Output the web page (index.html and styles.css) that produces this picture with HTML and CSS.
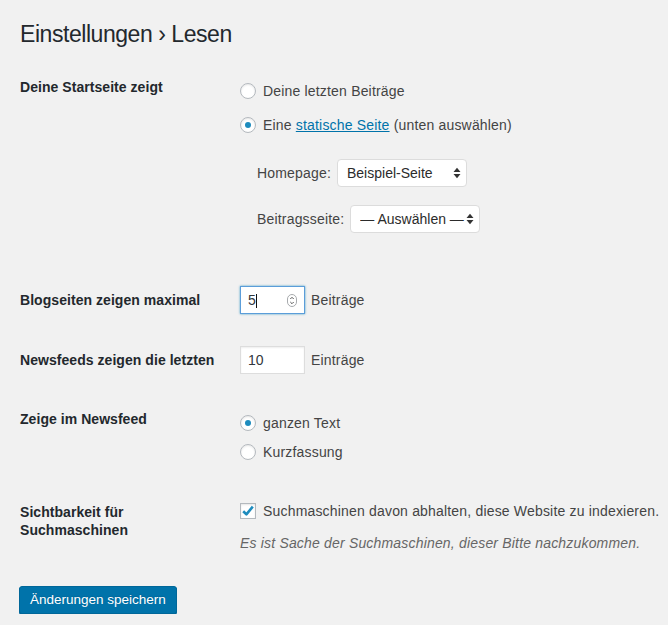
FILE: index.html
```html
<!DOCTYPE html>
<html lang="de">
<head>
<meta charset="utf-8">
<title>Einstellungen › Lesen</title>
<link rel="stylesheet" href="styles.css">
</head>
<body>
<div class="wrap">
  <h1 class="title">Einstellungen › Lesen</h1>
  <form class="settings">
    <div class="row row-front">
      <div class="th">Deine Startseite zeigt</div>
      <div class="td">
        <label class="choice"><input type="radio" name="front"><span>Deine letzten Beiträge</span></label>
        <label class="choice choice-gap"><input type="radio" name="front" checked><span>Eine <a href="#">statische Seite</a> (unten auswählen)</span></label>
        <div class="pages">
          <label class="page-row"><span>Homepage:</span>
            <span class="select-wrap">
              <select class="select"><option>Beispiel-Seite</option></select>
              <svg class="updown" width="8" height="12" viewBox="0 0 8 12"><path d="M0.5 5 L4 0.8 L7.5 5 Z M0.5 7 L4 11.2 L7.5 7 Z" fill="#333"/></svg>
            </span>
          </label>
          <label class="page-row page-row-2"><span>Beitragsseite:</span>
            <span class="select-wrap">
              <select class="select"><option>— Auswählen —</option></select>
              <svg class="updown" width="8" height="12" viewBox="0 0 8 12"><path d="M0.5 5 L4 0.8 L7.5 5 Z M0.5 7 L4 11.2 L7.5 7 Z" fill="#333"/></svg>
            </span>
          </label>
        </div>
      </div>
    </div>

    <div class="row row-center row-blog">
      <div class="th">Blogseiten zeigen maximal</div>
      <div class="td inline">
        <span class="num-wrap">
          <input class="text-input focused" type="text" value="5">
          <span class="caret"></span>
          <svg class="spinner" width="10" height="13" viewBox="0 0 10 13"><rect x="0.5" y="0.5" width="9" height="12" rx="4.5" fill="#fff" stroke="#a7aaad"/><path d="M3.3 5 L5 3.3 L6.7 5 M3.3 8 L5 9.7 L6.7 8" fill="none" stroke="#555" stroke-width="1"/></svg>
        </span>
        <span>Beiträge</span>
      </div>
    </div>

    <div class="row row-center row-feed">
      <div class="th">Newsfeeds zeigen die letzten</div>
      <div class="td inline">
        <input class="text-input" type="text" value="10">
        <span>Einträge</span>
      </div>
    </div>

    <div class="row row-newsfeed">
      <div class="th">Zeige im Newsfeed</div>
      <div class="td">
        <label class="choice"><input type="radio" name="feed" checked><span>ganzen Text</span></label>
        <label class="choice choice-gap-small"><input type="radio" name="feed"><span>Kurzfassung</span></label>
      </div>
    </div>

    <div class="row row-search">
      <div class="th th-search">Sichtbarkeit für Suchmaschinen</div>
      <div class="td">
        <label class="choice nowrap">
          <span class="checkbox"><svg width="14" height="14" viewBox="0 0 14 14"><path d="M2.2 7.2 L5.4 10.3 L11.8 2.6" fill="none" stroke="#1e8cbe" stroke-width="2.6" stroke-linejoin="round"/></svg></span>
          <span>Suchmaschinen davon abhalten, diese Website zu indexieren.</span>
        </label>
        <p class="description">Es ist Sache der Suchmaschinen, dieser Bitte nachzukommen.</p>
      </div>
    </div>

    <div class="submit">
      <button type="button" class="button-primary">Änderungen speichern</button>
    </div>
  </form>
</div>
</body>
</html>
```

FILE: styles.css
```css
html, body {
  margin: 0;
  padding: 0;
  background: #f1f1f1;
}

body {
  font-family: "Liberation Sans", Arial, sans-serif;
  font-size: 14px;
  color: #444;
}

.wrap {
  padding: 0 0 0 20px;
}

.title {
  margin: 0;
  padding-top: 19px;
  font-size: 23px;
  line-height: 30px;
  font-weight: 400;
  letter-spacing: -0.45px;
  color: #23282d;
}

.row {
  display: grid;
  grid-template-columns: 220px minmax(0, 1fr);
  align-items: start;
}

.th {
  box-sizing: border-box;
  padding-right: 20px;
  font-weight: 700;
  color: #23282d;
  line-height: 18px;
  letter-spacing: 0.05px;
}

.td {
  letter-spacing: 0.18px;
}

.row-front { margin-top: 29px; }
.row-front .td { padding-top: 1px; }

.row-center { align-items: center; }
.row-blog { margin-top: 53px; }
.row-feed { margin-top: 32px; }

.row-newsfeed { margin-top: 36px; }
.row-newsfeed .td { padding-top: 1px; }

.row-search { margin-top: 35px; }
.th-search { padding-top: 4px; }

.choice {
  display: flex;
  align-items: center;
  gap: 7px;
  height: 24px;
  line-height: 24px;
  color: #444;
}

.nowrap { white-space: nowrap; }

.choice-gap { margin-top: 10px; }
.choice-gap-small { margin-top: 5px; }

.choice a {
  color: #0073aa;
  text-decoration: underline;
}

input[type="radio"] {
  appearance: none;
  -webkit-appearance: none;
  flex-shrink: 0;
  box-sizing: border-box;
  width: 16px;
  height: 16px;
  margin: 0;
  border: 1px solid #b4b9be;
  border-radius: 50%;
  background: #fff;
  box-shadow: inset 0 1px 2px rgba(0, 0, 0, 0.1);
  display: grid;
  place-content: center;
}

input[type="radio"]:checked::before {
  content: "";
  display: block;
  width: 6px;
  height: 6px;
  border-radius: 50%;
  background: #1e8cbe;
}

.pages {
  margin-top: 22px;
  padding-left: 17px;
}

.page-row {
  display: flex;
  align-items: center;
  gap: 6px;
  height: 28px;
  color: #444;
}

.page-row-2 { margin-top: 18px; }

.select-wrap {
  position: relative;
  display: inline-block;
}

.select {
  appearance: none;
  -webkit-appearance: none;
  box-sizing: border-box;
  width: 130px;
  height: 28px;
  margin: 0;
  padding: 0 12px 0 9px;
  border: 1px solid #dcdcdc;
  border-radius: 4px;
  background: #fff;
  font-family: "Liberation Sans", Arial, sans-serif;
  font-size: 14px;
  letter-spacing: 0;
  color: #2b2b2b;
}

.updown {
  position: absolute;
  right: 6px;
  top: 8px;
  pointer-events: none;
}

.inline {
  display: flex;
  align-items: center;
  gap: 6px;
}

.num-wrap {
  position: relative;
  display: inline-block;
  height: 28px;
}

.text-input {
  box-sizing: border-box;
  width: 65px;
  height: 28px;
  margin: 0;
  padding: 0 7px;
  border: 1px solid #ddd;
  border-radius: 0;
  background: #fff;
  box-shadow: inset 0 1px 2px rgba(0, 0, 0, 0.07);
  font-family: "Liberation Sans", Arial, sans-serif;
  font-size: 14px;
  color: #32373c;
  outline: none;
}

.text-input.focused {
  border-color: #5b9dd9;
  box-shadow: 0 0 2px rgba(30, 140, 190, 0.8);
}

.caret {
  position: absolute;
  left: 16px;
  top: 8px;
  width: 1px;
  height: 14px;
  background: #111;
}

.spinner {
  position: absolute;
  left: 47px;
  top: 8px;
}

.checkbox {
  flex-shrink: 0;
  box-sizing: border-box;
  width: 16px;
  height: 16px;
  border: 1px solid #b4b9be;
  background: #fff;
  box-shadow: inset 0 1px 2px rgba(0, 0, 0, 0.1);
  display: grid;
  place-content: center;
}

.checkbox svg { display: block; }

.description {
  margin: 11px 0 0;
  line-height: 18px;
  font-style: italic;
  color: #666;
}

.submit {
  margin-top: 34px;
}

.button-primary {
  box-sizing: border-box;
  height: 28px;
  margin: 0 0 0 -1px;
  padding: 0 10px;
  border: 1px solid #006799;
  border-radius: 3px;
  background: #0073aa;
  box-shadow: 0 1px 0 #006799;
  color: #fff;
  font-family: "Liberation Sans", Arial, sans-serif;
  font-size: 13.5px;
  line-height: 26px;
  text-shadow: 0 -1px 1px #006799;
  cursor: pointer;
}
```
